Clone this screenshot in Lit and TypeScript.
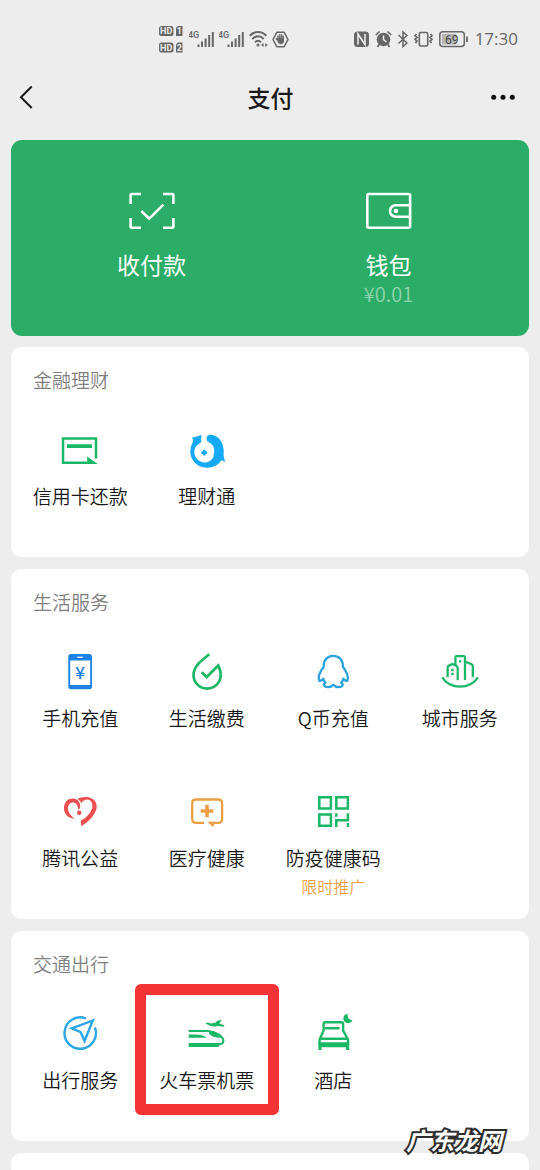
import { LitElement, html, svg, css, nothing, SVGTemplateResult } from "lit";
import { customElement, property } from "lit/decorators.js";

const GREEN = "#1bb766";
const BLUE = "#16a9f5";
const ORANGE = "#eb9f45";
const RED = "#ec4f51";

const icons: Record<string, SVGTemplateResult> = {
  scan: svg`<g fill="none" stroke="#fff" stroke-width="2.6" stroke-linejoin="round">
      <path d="M2.6 13V4Q2.6 3 3.6 3H13M35 3H44.4Q45.4 3 45.4 4V13M45.4 27V35.7Q45.4 36.7 44.4 36.7H35M13 36.7H3.6Q2.6 36.7 2.6 35.7V27"/>
      <path d="M13.3 20L21.3 27.7L35.3 13.7"/></g>`,
  wallet: svg`<g fill="none" stroke="#fff" stroke-width="2.6">
      <rect x="2.3" y="3" width="42.8" height="33.7" rx="1.4"/>
      <path d="M45.1 14.3H30.7A5.7 5.7 0 0 0 30.7 25.7H45.1"/></g>
      <circle cx="30.9" cy="20" r="2.3" fill="#fff"/>`,
  card: svg`<path d="M36 27.5V7.5H3V31.7H28" fill="none" stroke="${GREEN}" stroke-width="2.5"/>
      <path d="M7 13.3H32V17H7Z M27.2 25.4L37.8 32.9H27.2Z" fill="${GREEN}"/>`,
  fund: svg`<path fill="${BLUE}" d="M14.9 3.8C12 4.3 8.5 6.8 5 6.5C6 8 6.2 9.5 5.6 11.5C1.5 19 2.8 28.5 10.5 34C18.5 39 30 37 34.3 29.3L38.3 31C37.3 28.5 36.8 26.5 36.6 24C38 13.5 32.5 3.7 23 3.7C19 4 18.4 9 21.4 11C26.3 13.2 28.2 17.5 26.9 22L26.2 26.6C23.5 31 19.5 32.3 15.3 31.3C7.5 29 5.4 20.5 9 15.6C11 12.9 14 12.2 14.4 10C14.4 8 13.4 6 14.9 3.8Z"/>
      <path fill="${BLUE}" d="M16.2 18.8H18.4L18.8 20.2L20.2 20.6V22.8L18.8 23.2L18.4 24.6H16.2L15.8 23.2L14.4 22.8V20.6L15.8 20.2Z"/>`,
  phone: svg`<rect x="8.3" y="1" width="23.7" height="35.3" rx="2.8" fill="#1d80e4"/>
      <rect x="10.2" y="7.5" width="20" height="24.5" fill="#fff"/>
      <path d="M17.3 4.3H22.7" stroke="#fff" stroke-width="1.3"/>
      <text x="20.2" y="25.5" text-anchor="middle" font-size="17" font-weight="500" fill="#1d80e4">¥</text>`,
  drop: svg`<path fill="none" stroke="${GREEN}" stroke-width="2.7" d="M22.3 1.3C15 7.3 6.5 13 6.5 22A13.6 13.6 0 0 0 33.7 22C33.7 18 32.8 15.5 31.2 12.5L19.7 24L14.6 19.2"/>`,
  qq: svg`<path fill="none" stroke="#2ba3de" stroke-width="2.3" stroke-linejoin="round" d="M20.3 2.8C13.8 2.8 10.5 7.5 10.6 14C7 18.500 4.8 23 6.2 27.800C7.8 28 9 27.3 10.2 25.7C10.6 27.3 11.3 28.6 12.5 29.7C9.3 31.5 11.3 34.2 14.8 34.2C17.8 34.2 19.3 33 20.3 31.8C21.3 33 22.8 34.2 25.8 34.2C29.3 34.2 31.3 31.5 28.1 29.7C29.3 28.6 30 27.3 30.4 25.7C31.6 27.3 32.8 28 34.4 27.8C35.8 23 33.6 18.5 30 14C30.1 7.5 26.8 2.8 20.3 2.8Z"/>`,
  city: svg`<g fill="none" stroke="${GREEN}" stroke-width="2.3" stroke-linejoin="round">
      <path d="M2.3 24.3C10 36.6 30 36.6 37.9 24.3"/>
      <path d="M15.4 12V4.5Q15.4 3.2 16.7 3.2H23.7Q25 3.200 25 4.5V27M25 8.5L31.5 11.3Q32.8 11.9 32.8 13.3V24.3"/>
      <path d="M7.6 24.3V15Q7.6 13.3 9 12.6L12.5 11L16 12.6Q17.7 13.4 17.7 15V27.3"/></g>
      <path d="M11.2 15.8H13.7V18.2H11.2ZM11.2 19.7H13.7V22.1H11.2ZM19 7.2H21.3V9.5H19Z" fill="${GREEN}"/>`,
  heart: svg`<path fill="${RED}" d="M14.8 25.6C8 25.5 3.6 20.5 3.9 14.5C4.4 8.3 8.700 5 13.4 5.500C17.500 6 20 8.800 20.2 12.500C20.200 14.500 19.700 16 18.600 17.200C18 12.500 16 9.200 12.900 9.400C8.700 9.800 7.200 13.500 8.300 17.500C9.300 21.300 11.800 24 14.800 25.600Z"/>
      <path fill="${RED}" d="M17.2 6C20 4.2 25 3.500 29.2 4.400C35.2 5.8 38.2 11.3 36 17.3C33.700 23.400 29 28.300 21.400 33.200L20.600 27.700C26.500 25 31.500 19 32.300 14.200C32.900 9 30.300 6.200 26.800 6.500C24 6.800 22.500 8.200 21.300 10.300C20.600 8.500 19.500 7 17.2 6Z"/>
      <circle cx="19.2" cy="19.8" r="2.2" fill="${RED}"/>`,
  medical: svg`<path fill="none" stroke="${ORANGE}" stroke-width="2.3" d="M17 29.800H9Q5.200 29.800 5.200 26V10.300Q5.200 6.500 9 6.500H31.300Q35.100 6.500 35.100 10.300V26Q35.100 29.800 31.300 29.800H22"/>
      <path fill="${ORANGE}" d="M20.500 28.700H27.500V31L25.800 34Z"/>
      <path d="M20 11.700V24.300M13.700 18H26.300" stroke="${ORANGE}" stroke-width="3.5"/>`,
  qr: svg`<path fill="none" stroke="${GREEN}" stroke-width="2.5" d="M6.300 4.300H17.900V15.400H6.300ZM23.300 4.300H34.900V15.400H23.300ZM6.300 21.600H17.900V32.700H6.300Z"/>
      <path fill="none" stroke="${GREEN}" stroke-width="2.5" d="M23.300 20.300V23.800M23.300 34V27.200H34.900V20.300M34.900 30V34"/>`,
  compass: svg`<g fill="none" stroke="#2ba6e8" stroke-width="2.4">
      <path d="M26 3.500A15.700 15.700 0 1 0 34.900 12.500"/>
      <path d="M32.800 5.500L11.800 13.400L20.700 17.200L24.600 26Z"/></g>`,
  train: svg`<path fill="none" stroke="${GREEN}" stroke-width="2.1" d="M1.700 16H21C28 16.200 36.400 21.300 36.400 25.800C36.400 28.300 34.500 29.400 31 29.400"/>
      <path fill="${GREEN}" d="M1.700 28H33.800L31.300 32H1.700ZM1.700 19.500H9C13 19.500 17 20.500 19.700 22.800H1.700ZM22 16.200C27.500 17 32 19.700 34 22.800C29 23 24.500 21.800 22 18.800Z"/>
      <path fill="${GREEN}" d="M18.500 8.300L20.500 7.500L24.300 8.600L28.500 7.600L30.500 5.800L34.800 4.700L32.300 8.400L37.500 10.300L36.500 11.800L30.500 10.900C26.500 12.200 22 11.200 18.500 8.300Z"/>`,
  hotel: svg`<path fill="none" stroke="${GREEN}" stroke-width="2.4" stroke-linejoin="round" d="M10.600 16V9Q10.600 7.200 12.400 7.200H28.300Q30.100 7.200 30.100 9V16M10.600 15.500L6.600 24.500V30M30.100 15.500L35 24.500V30M6.600 23.800H35M12 13.200H26.500"/>
      <path fill="${GREEN}" d="M5.400 27.200H36.200V35H33V32.300H8.600V35H5.400Z"/>
      <path fill="${GREEN}" d="M34.800 -1.200A4.700 4.700 0 1 0 39.500 5.300A5 5 0 0 1 34.800 -1.200Z"/>`,
};

interface Tile {
  icon: string;
  label: string;
  note?: string;
  marked?: boolean;
}

const sections: { title: string; tiles: Tile[] }[] = [
  {
    title: "金融理财",
    tiles: [
      { icon: "card", label: "信用卡还款" },
      { icon: "fund", label: "理财通" },
    ],
  },
  {
    title: "生活服务",
    tiles: [
      { icon: "phone", label: "手机充值" },
      { icon: "drop", label: "生活缴费" },
      { icon: "qq", label: "Q币充值" },
      { icon: "city", label: "城市服务" },
      { icon: "heart", label: "腾讯公益" },
      { icon: "medical", label: "医疗健康" },
      { icon: "qr", label: "防疫健康码", note: "限时推广" },
    ],
  },
  {
    title: "交通出行",
    tiles: [
      { icon: "compass", label: "出行服务" },
      { icon: "train", label: "火车票机票", marked: true },
      { icon: "hotel", label: "酒店" },
    ],
  },
];

@customElement("status-bar")
class StatusBar extends LitElement {
  static styles = css`
    :host {
      display: flex;
      align-items: center;
      height: 78px;
      padding: 0 22px 0 159px;
      color: #666;
    }
    .group {
      display: flex;
      align-items: center;
      gap: 4px;
    }
    .right {
      margin-left: auto;
      gap: 6px;
    }
    svg {
      display: block;
      font-family: Roboto, sans-serif;
    }
    .time {
      font-family: "Open Sans", sans-serif;
      font-size: 17px;
      line-height: 24px;
      white-space: nowrap;
    }
  `;

  signal() {
    return html`<svg width="26" height="24" viewBox="0 0 26 24" fill="#666" aria-hidden="true">
      <text x="-1" y="11" font-size="9" font-weight="500">4G</text>
      <path d="M8.500 17.500h2v2.500h-2zM12 14.500h2v5.500h-2zM15.600 11.500h2v8.500h-2zM19.200 8h2v12h-2zM22.800 5h2v15h-2z"/>
    </svg>`;
  }

  render() {
    return html`
      <div class="group">
        <svg width="26" height="28" viewBox="0 0 26 28" fill="#666" aria-hidden="true">
          <rect y="1" width="14.5" height="10" rx="2.5"/><path d="M17 3l2-2h4.500v10H17z"/>
          <rect y="17.5" width="14.5" height="10" rx="2.5"/><path d="M17 19.500l2-2h4.500v10H17z"/>
          <g fill="#ececec" font-size="9" font-weight="700" text-anchor="middle">
            <text x="7.2" y="9.3">HD</text><text x="20.3" y="9.3">1</text>
            <text x="7.2" y="25.8">HD</text><text x="20.3" y="25.8">2</text>
          </g>
        </svg>
        ${this.signal()}${this.signal()}
        <svg width="19" height="24" viewBox="0 0 19 24" fill="none" stroke="#666" stroke-width="2" aria-hidden="true">
          <path d="M.7 8.700C5.500 3.700 12.500 3.700 17.300 8.700M3.300 12C7 8.300 11.200 8.300 14.700 12M6 15.200C8 13.300 10 13.300 12 15.200"/>
          <circle cx="9" cy="18" r="1.5" fill="#666" stroke="none"/>
          <path d="M12 18l2.500-2v4zM18.700 18l-2.500-2v4z" fill="#666" stroke="none"/>
        </svg>
        <svg width="17" height="24" viewBox="0 0 17 24" aria-hidden="true">
          <path d="M4.800 5.300H12.200L16 12.500L12.200 19.700H4.800L1 12.500Z" fill="none" stroke="#666" stroke-width="1.5" stroke-linejoin="round"/>
          <path d="M6 12V9M7.800 12V7.800M9.600 12V8M11.300 12V9.300M5.300 13L4.300 11.800" stroke="#666" stroke-width="1.4" stroke-linecap="round"/>
          <path d="M5.300 11.300H12V14Q11.500 17.300 8.800 17.300Q6.500 17.300 5.300 14Z" fill="#666"/>
        </svg>
      </div>
      <div class="group right">
        <svg width="15" height="24" viewBox="0 0 15 24" aria-hidden="true">
          <rect y="4.5" width="15" height="15.5" rx="3.5" fill="#666"/>
          <path d="M4 17.500V7L11 17.500V7" fill="none" stroke="#ececec" stroke-width="1.6"/>
        </svg>
        <svg width="17" height="24" viewBox="0 0 17 24" aria-hidden="true">
          <circle cx="8.5" cy="12.5" r="6.8" fill="#666"/>
          <path d="M.8 8L4.500 4.500M16.200 8L12.500 4.500M4 17.500L2.500 20M13 17.500L14.500 20" stroke="#666" stroke-width="1.7"/>
          <path d="M8.500 8.500V12.700L11.500 15" fill="none" stroke="#ececec" stroke-width="1.5"/>
        </svg>
        <svg width="10" height="24" viewBox="0 0 10 24" fill="none" stroke="#666" stroke-width="1.5" aria-hidden="true">
          <path d="M.5 8L9 16L5 19.500V5L9 8.500L.5 16.500"/>
        </svg>
        <svg width="19" height="24" viewBox="0 0 19 24" fill="none" stroke="#666" stroke-width="1.6" aria-hidden="true">
          <rect x="5.3" y="5.5" width="8.4" height="13.5" rx="1.5"/>
          <path d="M2.500 7L1 8.700L3 10.500L1 12.300L3 14.100L1.500 16M16.500 7L18 8.700L16 10.500L18 12.300L16 14.100L17.500 16"/>
        </svg>
        <svg width="30" height="24" viewBox="0 0 30 24" aria-label="69%">
          <rect x=".8" y="4.8" width="24.5" height="14.7" rx="3" fill="none" stroke="#666" stroke-width="1.5"/>
          <rect x="2.8" y="6.8" width="14.5" height="10.7" rx="1" fill="#b7b7b7"/>
          <path d="M28 9.500V15" stroke="#666" stroke-width="1.8"/>
          <text x="12.7" y="16.6" text-anchor="middle" font-size="12" fill="#444">69</text>
        </svg>
        <span class="time">17:30</span>
      </div>
    `;
  }
}

@customElement("service-tile")
class ServiceTile extends LitElement {
  @property({ attribute: false }) tile!: Tile;

  static styles = css`
    :host {
      display: block;
      position: relative;
    }
    .tile {
      display: flex;
      flex-direction: column;
      align-items: center;
      width: 100%;
      height: 140px;
      padding: 14px 0 0;
      border: 0;
      background: none;
      font: inherit;
      color: #191919;
    }
    .icon {
      display: block;
      overflow: visible;
      font-family: "Noto Sans CJK SC", sans-serif;
    }
    .label {
      margin-top: 11px;
      font-size: 19px;
      line-height: 28px;
      font-weight: 350;
      white-space: nowrap;
    }
    .note {
      margin-top: 4px;
      font-size: 16px;
      line-height: 20px;
      font-weight: 350;
      color: #ec9f49;
    }
    .marker {
      position: absolute;
      inset: -17px -9px 26px -9px;
      border: 11px solid #f43336;
      border-radius: 6px;
      pointer-events: none;
    }
  `;

  render() {
    const { icon, label, note, marked } = this.tile;
    return html`
      <button class="tile" type="button">
        <svg class="icon" width="40" height="40" viewBox="0 0 40 40" aria-hidden="true">${icons[icon]}</svg>
        <span class="label">${label}</span>
        ${note ? html`<span class="note">${note}</span>` : nothing}
      </button>
      ${marked ? html`<div class="marker"></div>` : nothing}
    `;
  }
}

@customElement("app-root")
class AppRoot extends LitElement {
  static styles = css`
    :host {
      display: flex;
      flex-direction: column;
      position: relative;
      box-sizing: border-box;
      min-height: 100vh;
      overflow: hidden;
      background: #ededed;
      color: #191919;
      font-family: "Noto Sans CJK SC", sans-serif;
    }
    .nav {
      display: grid;
      grid-template-columns: 1fr auto 1fr;
      align-items: center;
      height: 38px;
      padding: 0 17px 0 18px;
      margin-bottom: 24px;
    }
    .nav-title {
      margin: 0;
      font-size: 23px;
      line-height: 32px;
      font-weight: 500;
    }
    .nav-button {
      padding: 0;
      border: 0;
      background: none;
    }
    .nav-button svg {
      display: block;
    }
    .more {
      justify-self: end;
    }
    .back {
      justify-self: start;
    }
    .pay {
      display: grid;
      grid-template-columns: 1fr 1fr;
      margin: 0 11px 11px;
      padding: 51px 22px 30px;
      border-radius: 11px;
      background: #2bad67;
    }
    .pay-item {
      display: flex;
      flex-direction: column;
      align-items: center;
      padding: 0;
      border: 0;
      background: none;
      font: inherit;
      color: #fff;
    }
    .pay-label {
      margin-top: 17px;
      font-size: 23px;
      line-height: 32px;
    }
    .pay-amount {
      margin-top: 2px;
      font-size: 20px;
      line-height: 24px;
      font-weight: 350;
      color: #8fd3ae;
    }
    .card {
      margin: 0 11px 12px;
      padding: 0 6px;
      border-radius: 11px;
      background: #fff;
    }
    .card-title {
      margin: 0;
      padding: 19px 16px 23px;
      font-size: 19px;
      line-height: 28px;
      font-weight: 350;
      color: #7f7f7f;
    }
    .grid {
      display: grid;
      grid-template-columns: repeat(4, 1fr);
    }
    .next {
      flex: 1;
      min-height: 17px;
      margin-bottom: 0;
      border-radius: 11px 11px 0 0;
    }
    .watermark {
      position: absolute;
      right: 38px;
      bottom: 14px;
      font-size: 24px;
      line-height: 32px;
      font-weight: 700;
      font-style: italic;
      color: #fff;
      -webkit-text-stroke: 4px #2e2e2e;
      paint-order: stroke fill;
    }
  `;

  render() {
    return html`
      <status-bar></status-bar>
      <header class="nav">
        <button class="nav-button back" type="button" aria-label="返回">
          <svg width="18" height="24" viewBox="0 0 18 24" fill="none" stroke="#191919" stroke-width="2">
            <path d="M13.700 1.500L3 12.200L13.700 23"/>
          </svg>
        </button>
        <h1 class="nav-title">支付</h1>
        <button class="nav-button more" type="button" aria-label="更多">
          <svg width="32" height="24" viewBox="0 0 32 24" fill="#111">
            <circle cx="2.7" cy="12.3" r="2.5"/><circle cx="12" cy="12.3" r="2.5"/><circle cx="21.3" cy="12.3" r="2.5"/>
          </svg>
        </button>
      </header>
      <main>
        <section class="pay">
          <button class="pay-item" type="button">
            <svg width="48" height="40" viewBox="0 0 48 40" aria-hidden="true">${icons.scan}</svg>
            <span class="pay-label">收付款</span>
          </button>
          <button class="pay-item" type="button">
            <svg width="48" height="40" viewBox="0 0 48 40" aria-hidden="true">${icons.wallet}</svg>
            <span class="pay-label">钱包</span>
            <span class="pay-amount">¥0.01</span>
          </button>
        </section>
        ${sections.map(
          (s) => html`
            <section class="card">
              <h2 class="card-title">${s.title}</h2>
              <div class="grid">
                ${s.tiles.map((t) => html`<service-tile .tile=${t}></service-tile>`)}
              </div>
            </section>
          `
        )}
      </main>
      <section class="card next"></section>
      <div class="watermark">广东龙网</div>
    `;
  }
}
